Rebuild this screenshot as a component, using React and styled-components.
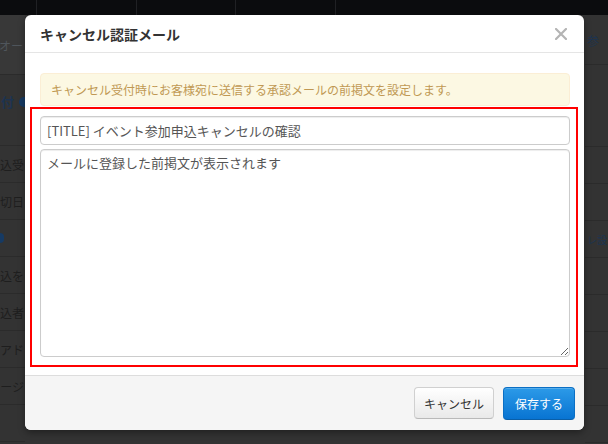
import React from 'react';
import styled, { createGlobalStyle } from 'styled-components';

const GlobalStyle = createGlobalStyle`
  html, body {
    margin: 0;
    padding: 0;
    background: #333;
  }
  body {
    font-family: "Noto Sans CJK JP", "Noto Sans", sans-serif;
  }
  * {
    box-sizing: border-box;
  }
`;

const Page = styled.div`
  position: relative;
  width: 608px;
  height: 444px;
  overflow: hidden;
  background: #333;
`;

const NavBar = styled.div`
  display: flex;
  height: 15px;
  background: #0b0c0e;
`;

const NavItem = styled.div`
  width: ${(p) => p.w}px;
  border-right: 1px solid #202124;
`;

const Behind = styled.div`
  display: flex;
  justify-content: space-between;
`;

const SideCol = styled.div`
  width: ${(p) => p.w}px;
  overflow: hidden;
  display: flex;
  flex-direction: column;
`;

const TabBar = styled.div`
  height: ${(p) => p.h}px;
  display: flex;
  align-items: center;
  justify-content: ${(p) => (p.left ? 'flex-end' : 'flex-start')};
  padding: 2px 2px 0;
  background: ${(p) => (p.shade ? '#383838' : '#333')};
  border-bottom: 1px solid #2b2b2b;
  white-space: nowrap;
  font-size: 12px;
  color: ${(p) => p.color || '#4f555b'};
`;

const HeadingRow = styled.div`
  height: 71px;
  display: flex;
  align-items: flex-start;
  justify-content: flex-end;
  padding-top: 19px;
  line-height: 16px;
  font-size: 13px;
  font-weight: 700;
  color: #1d3350;
  white-space: nowrap;
  border-bottom: 1px solid #2b2b2b;
  gap: 5px;
`;

const Row = styled.div`
  height: ${(p) => p.h || 37}px;
  display: flex;
  align-items: center;
  justify-content: ${(p) => (p.left ? 'flex-end' : 'flex-start')};
  padding: ${(p) => p.pad || (p.left ? '0 1px 0 0' : '0 0 0 2px')};
  font-size: ${(p) => p.size || 12}px;
  color: ${(p) => p.color || '#1e1e1e'};
  white-space: nowrap;
  border-bottom: 1px solid #2b2b2b;
`;

const Dot = styled.span`
  flex: none;
  display: inline-block;
  width: ${(p) => (p.tail ? 4 : 6)}px;
  height: 10px;
  margin-top: ${(p) => (p.tail ? 0 : 3)}px;
  border-radius: ${(p) => (p.tail ? '0 5px 5px 0' : '5px 0 0 5px')};
  background: #163a63;
`;

const Modal = styled.div`
  position: absolute;
  top: 15px;
  left: 25px;
  width: 559px;
  height: 415px;
  background: #fff;
  border-radius: 6px;
  box-shadow: 0 3px 7px rgba(0, 0, 0, 0.35);
  display: flex;
  flex-direction: column;
`;

const Header = styled.div`
  height: 38px;
  flex: none;
  display: flex;
  align-items: center;
  justify-content: space-between;
  padding: 0 16px 0 15px;
  border-bottom: 1px solid #e5e5e5;
`;

const Title = styled.h3`
  margin: 0;
  font-size: 14px;
  font-weight: 700;
  color: #333;
  line-height: 20px;
`;

const CloseButton = styled.button`
  border: 0;
  background: none;
  padding: 0;
  width: 14px;
  height: 14px;
  display: flex;
  align-items: center;
  justify-content: center;
  cursor: pointer;
`;

const Body = styled.div`
  flex: 1;
  padding: 20px 14px 8px 15px;
`;

const Alert = styled.div`
  height: 33px;
  padding: 0 10px;
  margin-bottom: 1px;
  line-height: 31px;
  font-size: 12px;
  color: #c09853;
  background: #fcf8e3;
  border: 1px solid #fbeed5;
  border-radius: 4px;
`;

const Highlight = styled.div`
  margin: 0 -8px 0 -10px;
  padding: 7px 6px 8px 8px;
  border: 2px solid #f00;
  display: flex;
  flex-direction: column;
  gap: 4px;
`;

const TextInput = styled.input`
  height: 29px;
  width: 100%;
  padding: 0 6px;
  font-family: inherit;
  font-size: 13px;
  color: #555;
  border: 1px solid #ccc;
  border-radius: 4px;
  box-shadow: inset 0 1px 1px rgba(0, 0, 0, 0.075);
  outline: none;
`;

const TextArea = styled.textarea`
  height: 208px;
  width: 100%;
  padding: 4px 6px;
  font-family: inherit;
  font-size: 13px;
  line-height: 18px;
  color: #555;
  border: 1px solid #ccc;
  border-radius: 4px;
  box-shadow: inset 0 1px 1px rgba(0, 0, 0, 0.075);
  resize: vertical;
  outline: none;
`;

const Footer = styled.div`
  height: 55px;
  flex: none;
  display: flex;
  align-items: center;
  justify-content: flex-end;
  gap: 9px;
  padding: 0 9px;
  background: #f5f5f5;
  border-top: 1px solid #ddd;
  border-radius: 0 0 6px 6px;
`;

const Button = styled.button`
  height: ${(p) => (p.primary ? 33 : 32)}px;
  padding: 0 ${(p) => (p.primary ? 11 : 9)}px;
  font-family: inherit;
  font-size: 12px;
  border-radius: 4px;
  cursor: pointer;
  color: ${(p) => (p.primary ? '#fff' : '#333')};
  background: ${(p) =>
    p.primary
      ? 'linear-gradient(#2c9ae8, #0874d2)'
      : 'linear-gradient(#ffffff, #e9e9e9)'};
  border: 1px solid ${(p) => (p.primary ? '#0b6fc4' : '#d0d0d0')};
  border-bottom-color: ${(p) => (p.primary ? '#0a5fa8' : '#b9b9b9')};
  box-shadow: inset 0 1px 0 rgba(255, 255, 255, 0.2);
`;

const leftRows = [
  { text: '込受' },
  { text: '切日' },
  { dot: true },
  { text: '込を' },
  { text: '込者' },
  { text: 'アド' },
  { text: 'ージ' },
  { text: '' },
];

const rightRows = [
  { text: '' },
  { text: 'レ設', color: '#1d3350' },
  { text: '' },
  { text: '' },
  { text: '' },
  { text: '' },
  { text: '' },
  { text: '' },
];

function Background() {
  return (
    <Behind>
      <SideCol w={25}>
        <TabBar h={60} left shade>オー</TabBar>
        <HeadingRow>
          <span>付</span>
          <Dot />
        </HeadingRow>
        {leftRows.map((r, i) =>
          r.dot ? (
            <Row key={i} pad="0">
              <Dot tail />
            </Row>
          ) : (
            <Row key={i} left>{r.text}</Row>
          )
        )}
      </SideCol>
      <SideCol w={23}>
        <TabBar h={50} color="#1d3350">参</TabBar>
        <Row h={82} />
        <Row />
        {rightRows.map((r, i) => (
          <Row key={i} color={r.color} size={10}>{r.text}</Row>
        ))}
      </SideCol>
    </Behind>
  );
}

export default function App() {
  return (
    <Page>
      <GlobalStyle />
      <NavBar>
        <NavItem w={37} />
        <NavItem w={100} />
        <NavItem w={99} />
        <NavItem w={100} />
      </NavBar>
      <Background />
      <Modal>
        <Header>
          <Title>キャンセル認証メール</Title>
          <CloseButton aria-label="閉じる">
            <svg width="12" height="12" viewBox="0 0 12 12">
              <path d="M1 1 L11 11 M11 1 L1 11" stroke="#b4b4b4" strokeWidth="2.2" strokeLinecap="square" />
            </svg>
          </CloseButton>
        </Header>
        <Body>
          <Alert>キャンセル受付時にお客様宛に送信する承認メールの前掲文を設定します。</Alert>
          <Highlight>
            <TextInput defaultValue="[TITLE] イベント参加申込キャンセルの確認" />
            <TextArea defaultValue="メールに登録した前掲文が表示されます" />
          </Highlight>
        </Body>
        <Footer>
          <Button>キャンセル</Button>
          <Button primary>保存する</Button>
        </Footer>
      </Modal>
    </Page>
  );
}
